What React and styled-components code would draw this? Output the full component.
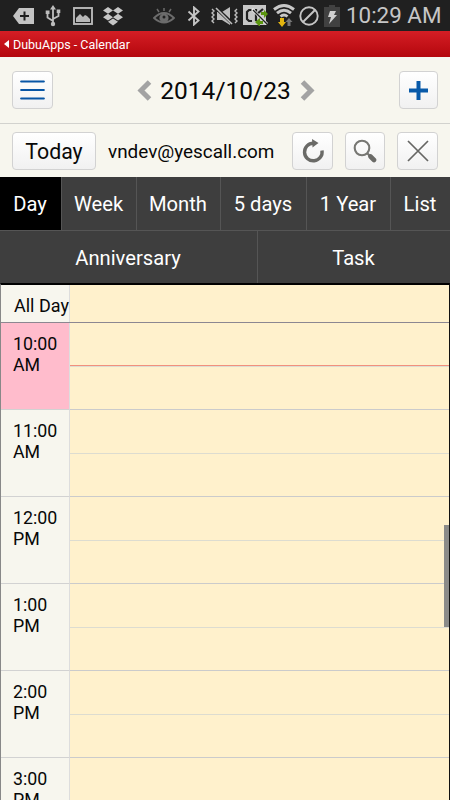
import React from 'react';
import styled, { createGlobalStyle } from 'styled-components';

const views = [
  { name: 'Day', width: 62, active: true },
  { name: 'Week', width: 75 },
  { name: 'Month', width: 84 },
  { name: '5 days', width: 86 },
  { name: '1 Year', width: 84 },
  { name: 'List', width: 59 },
];

const hours = ['10:00 AM', '11:00 AM', '12:00 PM', '1:00 PM', '2:00 PM', '3:00 PM'];

function StatusBar() {
  return (
    <Status>
      <StatusIcon $w={22} $left={12} viewBox="0 0 22 18">
        <path d="M7 1h15v16H7L1 9z" fill="#c4c4c4" />
        <path d="M12.500 4.500v9M8 9h9" stroke="#202020" strokeWidth="2" />
      </StatusIcon>
      <StatusIcon $w={16} $left={11} $h={22} viewBox="0 0 16 22">
        <g fill="none" stroke="#bdbdbd" strokeWidth="1.800">
          <path d="M8 3v16M8 16L2.500 12.500V8M8 14l5.500-3V7" />
        </g>
        <path d="M8 0l3 4.500H5zM.7 5.500h3.800V9H.7zM11.700 4.500h3.600V8h-3.600z" fill="#bdbdbd" />
        <circle cx="8" cy="19" r="2.200" fill="#bdbdbd" />
      </StatusIcon>
      <StatusIcon $w={20} $left={12} viewBox="0 0 20 18">
        <rect x="1" y="1" width="18" height="16" fill="none" stroke="#b8b8b8" strokeWidth="1.900" />
        <path d="M3 15v-4l4-4 3 3 2-2 2 1 3 3v3z" fill="#b8b8b8" />
      </StatusIcon>
      <StatusIcon $w={22} $left={9} $h={20} viewBox="0 0 22 20">
        <path
          d="M6 1l5 3.500-5 3.300L1 4.500zM16 1l5 3.500-5 3.300-5-3.300zM6 7.800l5 3.400-5 3.300-5-3.300zM16 7.800l5 3.400-5 3.300-5-3.300zM6 15.700l5-3.300 5 3.300-5 3.800z"
          fill="#c6c6c6"
        />
      </StatusIcon>
      <StatusIcon $w={22} $left={29} viewBox="0 0 22 18">
        <path d="M1 11Q11 1 21 11Q11 20 1 11z" fill="none" stroke="#6c6c6c" strokeWidth="1.800" />
        <circle cx="11" cy="11" r="4.600" fill="#6c6c6c" />
        <circle cx="11" cy="10" r="1.500" fill="#202020" />
        <path d="M11 4V1M6 5L4 2M16 5l2-3" stroke="#6c6c6c" strokeWidth="1.500" />
      </StatusIcon>
      <StatusIcon $w={14} $left={12} $h={20} viewBox="0 0 14 20">
        <path d="M1.500 5.500l10 9L7 18.500V1.500l4.500 4-10 9" fill="none" stroke="#c4c4c4" strokeWidth="1.900" />
      </StatusIcon>
      <StatusIcon $w={27} $left={10} viewBox="0 0 27 18">
        <path d="M6 5h5l8-5v18l-8-5H6z" fill="#bdbdbd" />
        <path d="M5 1l17 16" stroke="#202020" strokeWidth="3.500" />
        <path d="M5 1l16 16" stroke="#bdbdbd" strokeWidth="1.600" />
        <path d="M1 2l2 2-2 2 2 2-2 2 2 2-2 2 2 2M26 2l-2 2 2 2-2 2 2 2-2 2 2 2-2 2" fill="none" stroke="#bdbdbd" strokeWidth="1.400" />
      </StatusIcon>
      <StatusIcon $w={25} $left={5} $h={21} viewBox="0 0 25 21">
        <path d="M0 0h23v20H0z" fill="#c7c7c7" />
        <path d="M10 5H6L4 7v7l2 2h3M13 4v12M20 4l-6 5" fill="none" stroke="#222" strokeWidth="2.200" />
        <path d="M9 4l15 15" stroke="#eee" strokeWidth="3" />
        <path d="M18 7v3h3v3l4-4-4-4v2zM12 17l5-4v3h3v3h-3v3z" fill="#5c9610" />
        <path d="M10 5l14 14" stroke="#222" strokeWidth="1.500" />
      </StatusIcon>
      <StatusIcon $w={22} $left={5} $h={23} viewBox="0 0 22 23">
        <path d="M1 5.500q10-8 20 0M4 9.200q7-6 14 0M7.500 12.500q3.500-3 7 0" fill="none" stroke="#c8c8c8" strokeWidth="2.900" />
        <path d="M7 14h4v4h2l-4 5-4-5h2z" fill="#e4b510" />
        <path d="M14.500 22v-4h-2l3.500-4 3.500 4h-2v4z" fill="#777" />
      </StatusIcon>
      <StatusIcon $w={20} $left={4} $h={20} viewBox="0 0 20 20">
        <circle cx="10" cy="10" r="8.700" fill="none" stroke="#c5c5c5" strokeWidth="1.900" />
        <path d="M4 16L16 4" stroke="#c5c5c5" strokeWidth="1.900" />
      </StatusIcon>
      <StatusIcon $w={16} $left={5} $h={22} viewBox="0 0 16 22">
        <path d="M5 0h6v2h5v20H0V2h5z" fill="#414141" />
        <path d="M6 6h6l-2 4h3l-8 9 2-7H4z" fill="#d0d0d0" />
      </StatusIcon>
      <Clock>10:29 AM</Clock>
    </Status>
  );
}

function App() {
  return (
    <Screen>
      <GlobalStyle />
      <StatusBar />
      <AppBar>
        <svg width="5" height="8" viewBox="0 0 5 8"><path d="M5 0v8L0 4z" fill="#fff" /></svg>
        <AppName>DubuApps - Calendar</AppName>
      </AppBar>
      <DateBar>
        <IconButton $w={41}>
          <svg width="25" height="20" viewBox="0 0 25 20">
            <path d="M1.200 1.500h22.600M1.200 10h22.600M1.200 18.500h22.600" stroke="#0755a5" strokeWidth="2.200" strokeLinecap="round" />
          </svg>
        </IconButton>
        <DateNav>
          <svg width="15" height="21" viewBox="0 0 15 21">
            <path d="M12.500 2L4 10.500l8.500 8.500" fill="none" stroke="#a3a3a3" strokeWidth="5" />
          </svg>
          <DateText>2014/10/23</DateText>
          <svg width="15" height="21" viewBox="0 0 15 21">
            <path d="M2.500 2L11 10.500 2.500 19" fill="none" stroke="#a3a3a3" strokeWidth="5" />
          </svg>
        </DateNav>
        <IconButton $w={39}>
          <svg width="19" height="19" viewBox="0 0 19 19">
            <path d="M9.500 0v19M0 9.500h19" stroke="#085aa9" strokeWidth="4" />
          </svg>
        </IconButton>
      </DateBar>
      <AccountBar>
        <TodayButton>Today</TodayButton>
        <Account>vndev@yescall.com</Account>
        <Tools>
          <IconButton $w={41}>
            <svg width="24" height="26" viewBox="0 0 24 26">
              <path d="M12.500 5.200A8.800 8.800 0 1 0 21 12.500" fill="none" stroke="#6a6a67" strokeWidth="3.400" />
              <path d="M11 1l6.500 4-6 4.500z" fill="#6a6a67" />
            </svg>
          </IconButton>
          <IconButton $w={40}>
            <svg width="24" height="24" viewBox="0 0 24 24">
              <circle cx="9" cy="9" r="7.300" fill="none" stroke="#777773" strokeWidth="2.100" />
              <path d="M14 14l3 3" stroke="#777773" strokeWidth="2.200" />
              <path d="M17.500 17.500l3.500 3.500" stroke="#6a6a67" strokeWidth="4.600" strokeLinecap="round" />
            </svg>
          </IconButton>
          <IconButton $w={41}>
            <svg width="22" height="22" viewBox="0 0 22 22">
              <path d="M1 1l20 20M21 1L1 21" stroke="#666663" strokeWidth="1.700" />
            </svg>
          </IconButton>
        </Tools>
      </AccountBar>
      <Tabs>
        {views.map((view) => (
          <Tab key={view.name} $w={view.width} $active={view.active}>{view.name}</Tab>
        ))}
      </Tabs>
      <Tabs $last>
        <Tab $w={258}>Anniversary</Tab>
        <Tab $w={192}>Task</Tab>
      </Tabs>
      <Schedule>
        <AllDayRow>
          <AllDayLabel>All Day</AllDayLabel>
          <Slot />
        </AllDayRow>
        {hours.map((hour, i) => (
          <HourRow key={hour}>
            <HourLabel $now={i === 0}>{hour}</HourLabel>
            <Slot>
              <HalfHour $now={i === 0} />
            </Slot>
          </HourRow>
        ))}
      </Schedule>
      <ScrollThumb />
    </Screen>
  );
}

const GlobalStyle = createGlobalStyle`
  body {
    margin: 0;
    font-family: Roboto, sans-serif;
    color: #080808;
  }
  * {
    box-sizing: border-box;
  }
`
const Screen = styled.div`
  position: relative;
  display: flex;
  flex-direction: column;
  width: 450px;
  height: 800px;
  overflow: hidden;
  background: #f7f6ee;
`
const Status = styled.div`
  display: flex;
  align-items: center;
  flex: 0 0 31px;
  background: #202020;
`
const StatusIcon = styled.svg`
  flex: none;
  width: ${(p) => p.$w}px;
  height: ${(p) => p.$h || 18}px;
  margin-left: ${(p) => p.$left}px;
`
const Clock = styled.div`
  margin-left: 6px;
  font-size: 22.4px;
  line-height: 31px;
  color: #c6c6c6;
  white-space: nowrap;
`
const AppBar = styled.div`
  display: flex;
  align-items: center;
  flex: 0 0 26px;
  padding-left: 4px;
  background: linear-gradient(#d51e25, #b4070d);
`
const AppName = styled.div`
  margin-left: 4px;
  padding-top: 1px;
  font-size: 12.5px;
  line-height: 25px;
  color: #fff;
`
const DateBar = styled.div`
  display: flex;
  align-items: center;
  justify-content: space-between;
  flex: 0 0 67px;
  padding: 0 12px;
  border-bottom: 1px solid #d2d2ce;
`
const IconButton = styled.button`
  display: flex;
  align-items: center;
  justify-content: center;
  width: ${(p) => p.$w}px;
  height: 38px;
  padding: 0;
  border: 1px solid #d2d2d2;
  border-radius: 4px;
  background: linear-gradient(#fff, #f1f1f1);
`
const DateNav = styled.div`
  display: flex;
  align-items: center;
  padding-right: 1px;
`
const DateText = styled.div`
  width: 132px;
  margin: 0 8px;
  padding-top: 1px;
  font-size: 24.5px;
  text-align: center;
  white-space: nowrap;
`
const AccountBar = styled.div`
  display: flex;
  align-items: center;
  flex: 0 0 53px;
  padding: 1px 12px 0;
`
const TodayButton = styled.button`
  flex: none;
  width: 84px;
  height: 38px;
  padding: 0;
  border: 1px solid #d2d2d2;
  border-radius: 4px;
  background: linear-gradient(#fff, #f1f1f1);
  font-family: inherit;
  font-size: 21.3px;
  color: #080808;
`
const Account = styled.div`
  margin-left: 12px;
  padding-top: 1px;
  font-size: 18.9px;
`
const Tools = styled.div`
  display: flex;
  gap: 12px;
  margin-left: auto;
`
const Tabs = styled.div`
  display: flex;
  flex: 0 0 53px;
  border-top: ${(p) => (p.$last ? '1px solid #555' : 'none')};
`
const Tab = styled.div`
  display: flex;
  align-items: center;
  justify-content: center;
  flex: 0 0 ${(p) => p.$w}px;
  padding: 1px 1px 0 0;
  border-right: 1px solid #555;
  background: ${(p) => (p.$active ? '#000' : '#3e3e3e')};
  color: #fff;
  font-size: 20.2px;
  &:last-child {
    border-right: none;
  }
`
const Schedule = styled.div`
  flex: none;
  border-top: 2px solid #000;
  border-left: 1px solid #888;
  border-right: 1px solid #111;
`
const AllDayRow = styled.div`
  display: flex;
  height: 38px;
  border-bottom: 1px solid #8c8791;
`
const AllDayLabel = styled.div`
  flex: 0 0 69px;
  padding: 10px 0 0 13px;
  border-right: 1px solid #ddd;
  font-size: 18px;
  line-height: 21px;
  white-space: nowrap;
`
const HourRow = styled.div`
  display: flex;
  height: 87px;
`
const HourLabel = styled.div`
  flex: 0 0 69px;
  padding: 10px 10px 0 12px;
  border-right: 1px solid #ddd;
  border-bottom: 1px solid #d2d2d2;
  background: ${(p) => (p.$now ? '#ffbccc' : '#f7f6ee')};
  font-size: 17.8px;
  line-height: 21px;
`
const Slot = styled.div`
  flex: 1;
  background: #fff1cc;
  ${HourRow} & {
    border-bottom: 1px solid #cbcbcb;
  }
`
const HalfHour = styled.div`
  height: ${(p) => (p.$now ? 43 : 44)}px;
  border-bottom: 1px solid ${(p) => (p.$now ? '#f2907c' : '#dddcd0')};
  box-shadow: ${(p) => (p.$now ? '0 1px 0 #dddcd0' : 'none')};
`
const ScrollThumb = styled.div`
  position: absolute;
  top: 525px;
  right: 1px;
  width: 5px;
  height: 102px;
  background: #8b8b89;
`
export default App;
